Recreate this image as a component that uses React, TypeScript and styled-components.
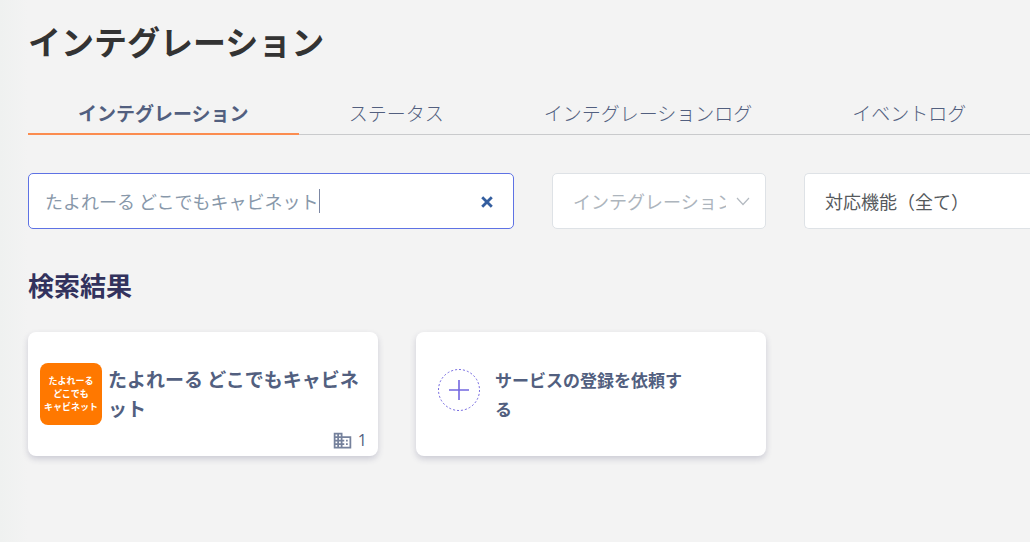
import React, { useState } from "react";
import styled, { createGlobalStyle } from "styled-components";
import { MdBusiness } from "react-icons/md";

const GlobalStyle = createGlobalStyle`
  *, *::before, *::after { box-sizing: border-box; }
  body {
    margin: 0;
    overflow-x: hidden;
    background: #f3f3f3;
    font-family: "Noto Sans CJK JP", "Noto Sans", sans-serif;
    color: #525f7f;
  }
  h1, h2, h3, p { margin: 0; }
  button, input, select { font-family: inherit; }
`;

const Page = styled.main`
  min-height: 100vh;
  padding: 16px 0 80px 28px;
  background: linear-gradient(to right, #eff1f0, #f3f3f3 28px);
`;

const Title = styled.h1`
  font-size: 33px;
  line-height: 50px;
  font-weight: 700;
  color: #333333;
`;

const Tabs = styled.nav`
  display: flex;
  margin-top: 26px;
  box-shadow: inset 0 -1px 0 #c9cacc;
`;

const Tab = styled.a<{ $active?: boolean }>`
  flex: none;
  padding: 0 50px;
  border-bottom: 2px solid ${(p) => (p.$active ? "#fb8c4f" : "transparent")};
  font-size: 19px;
  line-height: 41px;
  font-weight: ${(p) => (p.$active ? 700 : 300)};
  color: #525f7f;
  text-decoration: none;
  white-space: nowrap;
`;

const Filters = styled.form`
  display: flex;
  gap: 38px;
  margin-top: 38px;
`;

const SearchField = styled.div`
  display: flex;
  align-items: center;
  flex: 0 0 486px;
  height: 56px;
  padding: 0 17px 0 16px;
  border: 1px solid #5e72e4;
  border-radius: 5px;
  background: #ffffff;
`;

const SearchInput = styled.input`
  field-sizing: content;
  min-width: 2px;
  max-width: 410px;
  height: 40px;
  padding: 0;
  border: 0;
  outline: 0;
  background: transparent;
  font-size: 18px;
  color: #8898aa;
`;

const Caret = styled.span`
  flex: none;
  width: 1px;
  height: 24px;
  background: #7c87a3;
`;

const ClearButton = styled.button`
  display: flex;
  margin-left: auto;
  padding: 4px 3px 2px;
  border: 0;
  background: transparent;
  cursor: pointer;
`;

const SelectField = styled.div<{ $wide?: boolean }>`
  display: flex;
  align-items: center;
  flex: ${(p) => (p.$wide ? "1 0 226px" : "0 0 214px")};
  min-width: 0;
  height: 56px;
  padding: 0 15px 0 20px;
  border: 1px solid #dee2e6;
  border-right-width: ${(p) => (p.$wide ? 0 : "1px")};
  border-radius: ${(p) => (p.$wide ? "5px 0 0 5px" : "5px")};
  background: #ffffff;

  svg { flex: none; }
`;

const Select = styled.select<{ $muted?: boolean }>`
  appearance: none;
  flex: 1 1 0;
  width: 0;
  min-width: 0;
  height: 40px;
  margin-right: 10px;
  padding: 0;
  border: 0;
  outline: 0;
  overflow: hidden;
  background: transparent;
  font-size: 18px;
  color: ${(p) => (p.$muted ? "#adb5bd" : "#55595c")};
`;

const SectionTitle = styled.h2`
  margin-top: 38px;
  font-size: 26px;
  line-height: 36px;
  font-weight: 700;
  color: #32325d;
`;

const Cards = styled.div`
  display: flex;
  flex-wrap: wrap;
  gap: 38px;
  margin-top: 29px;
`;

const Card = styled.article`
  display: flex;
  flex-direction: column;
  width: 350px;
  min-height: 124px;
  padding: 31px 11px 5px 12px;
  border-radius: 8px;
  background: #ffffff;
  box-shadow: 0 3px 6px rgba(50, 50, 93, 0.2);
`;

const CardBody = styled.div<{ $gap: number; $inset?: boolean }>`
  display: flex;
  align-items: flex-start;
  gap: ${(p) => p.$gap}px;
  padding: ${(p) => (p.$inset ? "2px 72px 0 8px" : "0")};
`;

const Logo = styled.div`
  display: flex;
  flex: none;
  align-items: center;
  justify-content: center;
  width: 62px;
  height: 62px;
  padding-bottom: 2px;
  border-radius: 8px;
  background: #ff7800;
  font-size: 9px;
  line-height: 13px;
  font-weight: 700;
  text-align: center;
  white-space: pre;
  color: #ffffff;
`;

const CardTitle = styled.h3<{ $small?: boolean }>`
  flex: 1;
  margin-top: ${(p) => (p.$small ? 0 : 1)}px;
  font-size: ${(p) => (p.$small ? 17 : 19)}px;
  line-height: 29px;
  font-weight: 700;
  color: #525f7f;
`;

const CardFooter = styled.p`
  display: flex;
  align-items: center;
  justify-content: flex-end;
  gap: 5px;
  margin-top: auto;
  font-family: "Open Sans", sans-serif;
  font-size: 16px;
  line-height: 22px;
`;

const AddIcon = styled.svg`
  flex: none;
  margin: 3px 0 0 1px;
`;

const tabs = ["インテグレーション", "ステータス", "インテグレーションログ", "イベントログ"];

export default function App() {
  const [query, setQuery] = useState("たよれーる どこでもキャビネット");

  return (
    <>
      <GlobalStyle />
      <Page>
        <Title>インテグレーション</Title>
        <Tabs>
          {tabs.map((name, i) => (
            <Tab key={name} href="#" $active={i === 0} aria-current={i === 0 ? "page" : undefined}>
              {name}
            </Tab>
          ))}
        </Tabs>

        <Filters onSubmit={(e) => e.preventDefault()}>
          <SearchField>
            <SearchInput
              type="text"
              aria-label="検索"
              value={query}
              onChange={(e) => setQuery(e.target.value)}
            />
            <Caret />
            <ClearButton type="button" aria-label="クリア" onClick={() => setQuery("")}>
              <svg width="12" height="12" viewBox="0 0 12 12" aria-hidden="true">
                <path d="M2.2 2.2 9.8 9.8M9.8 2.2 2.2 9.8" stroke="#345e9f" strokeWidth="2.8" strokeLinecap="square" />
              </svg>
            </ClearButton>
          </SearchField>
          <SelectField>
            <Select $muted aria-label="インテグレーション">
              <option>インテグレーション</option>
            </Select>
            <svg width="14" height="9" viewBox="0 0 14 9" aria-hidden="true">
              <path d="M1 1 7 7.5 13 1" fill="none" stroke="#b4bac1" strokeWidth="1.2" />
            </svg>
          </SelectField>
          <SelectField $wide>
            <Select aria-label="対応機能">
              <option>対応機能（全て）</option>
            </Select>
          </SelectField>
        </Filters>

        <SectionTitle>検索結果</SectionTitle>
        <Cards>
          <Card>
            <CardBody $gap={6}>
              <Logo>{"たよれーる\nどこでも\nキャビネット"}</Logo>
              <CardTitle>たよれーる どこでもキャビネット</CardTitle>
            </CardBody>
            <CardFooter>
              <MdBusiness size={21} color="#75819c" aria-hidden="true" />
              1
            </CardFooter>
          </Card>
          <Card>
            <CardBody $gap={14} $inset>
              <AddIcon width="44" height="44" viewBox="0 0 44 44" fill="none" stroke="#7367e0" aria-hidden="true">
                <circle cx="22" cy="22" r="20.5" strokeDasharray="2 2" strokeWidth="1" />
                <path d="M22 12v20M12 22h20" strokeWidth="1.6" />
              </AddIcon>
              <CardTitle $small>サービスの登録を依頼する</CardTitle>
            </CardBody>
          </Card>
        </Cards>
      </Page>
    </>
  );
}
